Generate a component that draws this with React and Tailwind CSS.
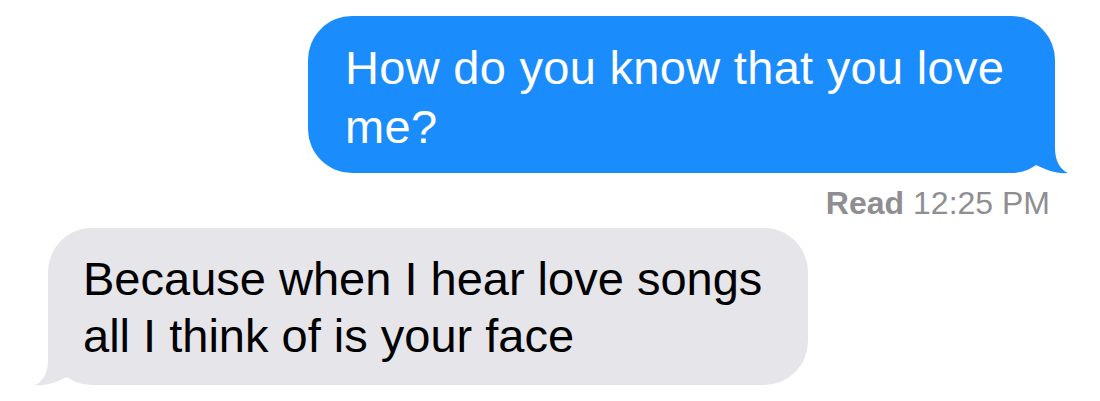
import React from "react";

function Tail({ color, className }) {
  return (
    <svg
      width="50"
      height="55"
      viewBox="0 0 50 55"
      className={className}
      aria-hidden="true"
    >
      <path
        d="M35 5 L35 28 C35 42 41 50 48 53 C38 54.5 26 50 16 45 L0 48 L0 5 Z"
        fill={color}
      />
    </svg>
  );
}

export default function App() {
  return (
    <div className="w-[1100px] h-[401px] bg-white overflow-hidden flex flex-col font-['Liberation_Sans',Arial,sans-serif]">
      <div className="flex justify-end pr-[45px] pt-[16px]">
        <div className="relative w-[747px] h-[157px] rounded-[44px] bg-[#1b8cfc] pl-[37px] pt-[22px] text-white text-[47px] leading-[59px] tracking-[0.3px]">
          <Tail color="#1b8cfc" className="absolute right-[-15px] bottom-[-2px]" />
          <div className="relative">
            <div>How do you know that you love</div>
            <div>me?</div>
          </div>
        </div>
      </div>
      <div className="flex justify-end pr-[50px] mt-[12px] h-[36px] items-center text-[32px] leading-[36px] text-[#8e8e93]">
        <span className="font-bold">Read</span>
        <span className="ml-[9px]">12:25 PM</span>
      </div>
      <div className="flex justify-start pl-[48px] mt-[7px]">
        <div className="relative w-[760px] h-[157px] rounded-[44px] bg-[#e5e5ea] pl-[35px] pt-[22px] text-black text-[47px] leading-[57px]">
          <Tail color="#e5e5ea" className="absolute left-[-15px] bottom-[-2px] -scale-x-100" />
          <div className="relative">
            <div>Because when I hear love songs</div>
            <div>all I think of is your face</div>
          </div>
        </div>
      </div>
    </div>
  );
}
